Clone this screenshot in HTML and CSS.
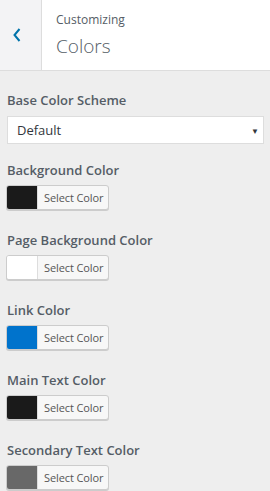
FILE: index.html
```html
<!DOCTYPE html>
<html lang="en">
<head>
    <meta charset="UTF-8">
    <meta name="viewport" content="width=device-width, initial-scale=1.0">
    <title>Colors</title>
    <link rel="stylesheet" href="styles.css">
</head>
<body>
    <div class="header">
        <button class="back" type="button">
            <svg width="10" height="14" viewBox="0 0 10 14"><path d="M7.5 1 L2.5 7 L7.5 13" fill="none" stroke="#0073aa" stroke-width="2"/></svg>
        </button>
        <div class="title">
            <span class="small">Customizing</span>
            <span class="big">Colors</span>
        </div>
    </div>

    <div class="controls">
        <div class="control control-select">
            <label class="label">Base Color Scheme</label>
            <div class="select">
                <span>Default</span>
                <span class="arrow">&#9660;</span>
            </div>
        </div>

        <div class="control">
            <label class="label">Background Color</label>
            <button class="picker" type="button"><span class="swatch" style="background:#1a1a1a"></span><span class="pick-text">Select Color</span></button>
        </div>

        <div class="control">
            <label class="label">Page Background Color</label>
            <button class="picker" type="button"><span class="swatch" style="background:#ffffff"></span><span class="pick-text">Select Color</span></button>
        </div>

        <div class="control">
            <label class="label">Link Color</label>
            <button class="picker" type="button"><span class="swatch" style="background:#0073cc"></span><span class="pick-text">Select Color</span></button>
        </div>

        <div class="control">
            <label class="label">Main Text Color</label>
            <button class="picker" type="button"><span class="swatch" style="background:#1a1a1a"></span><span class="pick-text">Select Color</span></button>
        </div>

        <div class="control">
            <label class="label">Secondary Text Color</label>
            <button class="picker" type="button"><span class="swatch" style="background:#686868"></span><span class="pick-text">Select Color</span></button>
        </div>
    </div>
</body>
</html>
```

FILE: styles.css
```css
body {
    margin: 0;
    background: #eeeeee;
    font-family: "Open Sans", "Noto Sans", sans-serif;
    color: #555d66;
    overflow: hidden;
}

.header {
    display: flex;
    height: 70px;
    background: #ffffff;
    border-bottom: 1px solid #dddddd;
}

.back {
    width: 42px;
    padding: 0 0 0 12px;
    border: none;
    border-right: 1px solid #dddddd;
    background: #f3f3f5;
    display: flex;
    align-items: center;
    justify-content: flex-start;
}

.title {
    display: flex;
    flex-direction: column;
    padding: 11px 0 0 14px;
}

.title .small {
    font-size: 12px;
    line-height: 18px;
}

.title .big {
    font-size: 19px;
    font-weight: 300;
    line-height: 30px;
    margin-top: 2px;
}

.controls {
    padding: 19px 6px 0 6px;
}

.control {
    margin-bottom: 20px;
}

.control-select {
    margin-bottom: 16px;
}

.label {
    display: block;
    font-size: 13px;
    font-weight: 600;
    line-height: 20px;
    margin-bottom: 5px;
    padding-left: 1px;
}

.control-select .label {
    margin-bottom: 6px;
}

.select {
    margin-left: 1px;
    height: 26px;
    background: #ffffff;
    border: 1px solid #dddddd;
    display: flex;
    align-items: center;
    justify-content: space-between;
    padding: 0 4px 0 9px;
    font-size: 13px;
    color: #32373c;
}

.arrow {
    font-size: 8px;
    color: #32373c;
}

.picker {
    display: flex;
    height: 25px;
    padding: 0;
    border: 1px solid #cccccc;
    border-radius: 3px;
    background: #f7f7f7;
    box-shadow: 0 1px 0 #cccccc;
    overflow: hidden;
}

.swatch {
    width: 30px;
    height: 100%;
    border-right: 1px solid #dddddd;
}

.pick-text {
    padding: 0 5px 0 6px;
    font-family: "Open Sans", "Noto Sans", sans-serif;
    font-size: 11px;
    letter-spacing: -0.1px;
    line-height: 23px;
    color: #555555;
}
```
